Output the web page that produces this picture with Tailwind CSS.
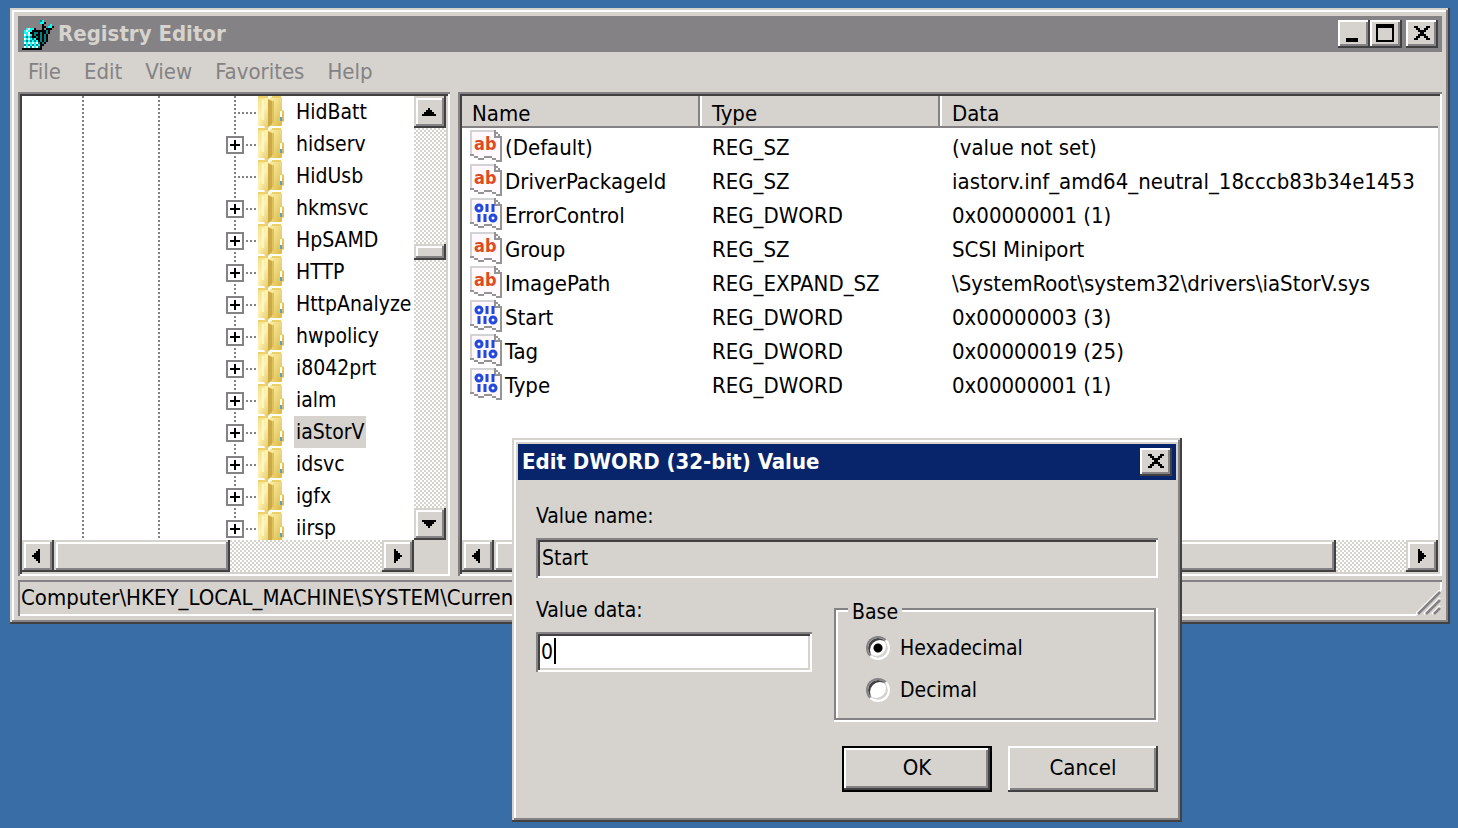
<!DOCTYPE html>
<html lang="en">
  <head>
    <meta charset="UTF-8" />
    <meta name="viewport" content="width=device-width, initial-scale=1.0" />
    <title>Registry Editor</title>
    <script src="https://cdn.jsdelivr.net/npm/@tailwindcss/browser@4"></script>
  </head>
  <body class="relative min-h-screen overflow-hidden bg-[#396da5] pt-2 pr-2 pl-[10px] font-['DejaVu_Sans_Condensed','DejaVu_Sans',sans-serif] text-[21px] leading-8 text-black">
    <!-- Icon shapes -->
    <svg class="absolute h-0 w-0">
      <defs>
        <linearGradient id="leftPanel" x1="0" y1="0" x2="1" y2="1">
          <stop offset="0" stop-color="#f3dc7c" />
          <stop offset="0.4" stop-color="#fdf3b4" />
          <stop offset="1" stop-color="#dfbd50" />
        </linearGradient>
        <linearGradient id="rightPanel" x1="0" y1="0" x2="1" y2="1">
          <stop offset="0" stop-color="#fbeea6" />
          <stop offset="0.5" stop-color="#ecd476" />
          <stop offset="1" stop-color="#d9b534" />
        </linearGradient>
      </defs>
      <symbol id="folder" viewBox="0 0 26 32">
        <path d="M12 1h12v13l2 1v10l-2 1v3l-1 1H12z" fill="url(#rightPanel)" />
        <path d="M0 1h10l4 3v24l-4 4H7l-1-2H0z" fill="url(#leftPanel)" />
        <path d="M10 3l4 2v23l-4 3z" fill="#cda945" />
        <path d="M14 5h2v22h-2z" fill="#dfc05a" />
        <path d="M4 4h2v20H4z" fill="#fff6c4" />
        <path d="M0 0h10v2H0zM14 0h9v2h-9z" fill="#ecd06a" />
        <path d="M22 15h2v6h-2z" fill="#fff" />
        <path d="M22 21h2v4h-2z" fill="#4aa5d6" />
      </symbol>
      <symbol id="page" viewBox="0 0 16 16">
        <path d="M0 0h12l4 4v11h-2l-1-1h-2l-1 1H6l-2-1H2l-2-1z" fill="#fff9fd" />
        <path d="M0 0h12v1H1v11H0z" fill="#d3d3d6" />
        <path d="M12 0h1v1h1v1h1v1h1v12h-1V4h-3z" fill="#949494" />
        <path d="M13 2h1v1h-1z" fill="#fff" />
        <path d="M0 12h2v1H0zM2 13h2v1H2zM4 14h3v1H4zM7 13h4v1H7zM11 14h2v1h-2zM13 15h3v1h-3z" fill="#949494" />
      </symbol>
      <symbol id="close" viewBox="0 0 8 7">
        <path d="M0 0h2v1h1v1h2V1h1V0h2v1H7v1H6v1H5v1h1v1h1v1h1v1H6V6H5V5H3v1H2v1H0V6h1V5h1V4h1V3H2V2H1V1H0z" />
      </symbol>
      <symbol id="arrow-up" viewBox="0 0 7 4">
        <path d="M3 0h1v1h1v1h1v1h1v1H0V3h1V2h1V1h1z" />
      </symbol>
      <symbol id="arrow-down" viewBox="0 0 7 4">
        <path d="M0 0h7v1H6v1H5v1H4v1H3V3H2V2H1V1H0z" />
      </symbol>
      <symbol id="arrow-left" viewBox="0 0 4 7">
        <path d="M0 3h1V2h1V1h1V0h1v7H3V6H2V5H1V4H0z" />
      </symbol>
      <symbol id="arrow-right" viewBox="0 0 4 7">
        <path d="M0 0h1v1h1v1h1v1h1v1H3v1H2v1H1v1H0z" />
      </symbol>
    </svg>

    <!-- Main window -->
    <main class="bg-[#d6d3ce] p-2 shadow-[inset_-2px_-2px_#424142,inset_2px_2px_#d6d3ce,inset_-4px_-4px_#848284,inset_4px_4px_#fff]">
      <header class="flex h-9 items-center bg-[#848284] pr-1 pl-1">
        <svg id="appIcon" class="mr-1 h-8 w-8" viewBox="0 0 16 16" shape-rendering="crispEdges"></svg>
        <h1 class="flex-1 text-[22px] font-bold text-[#d6d3ce]">Registry Editor</h1>
        <button aria-label="Minimize" class="flex h-7 w-8 items-end bg-[#d6d3ce] pb-[6px] pl-2 shadow-[inset_-2px_-2px_#424142,inset_2px_2px_#fff,inset_-4px_-4px_#848284]">
          <span class="h-1 w-3 bg-black"></span>
        </button>
        <button aria-label="Maximize" class="flex h-7 w-8 items-start bg-[#d6d3ce] pt-1 pl-[6px] shadow-[inset_-2px_-2px_#424142,inset_2px_2px_#fff,inset_-4px_-4px_#848284]">
          <span class="h-[18px] w-[18px] border-2 border-t-4 border-black"></span>
        </button>
        <button aria-label="Close" class="ml-1 flex h-7 w-8 items-start bg-[#d6d3ce] pt-[6px] pl-2 shadow-[inset_-2px_-2px_#424142,inset_2px_2px_#fff,inset_-4px_-4px_#848284]">
          <svg class="h-[14px] w-4" shape-rendering="crispEdges"><use href="#close" /></svg>
        </button>
      </header>

      <nav class="flex h-10 items-center gap-[23px] pl-[10px] text-[22px] text-[#848284]">
        <button>File</button>
        <button>Edit</button>
        <button>View</button>
        <button>Favorites</button>
        <button>Help</button>
      </nav>

      <div class="flex gap-2">
        <!-- Key tree -->
        <section class="w-[432px] shrink-0 bg-white p-1 shadow-[inset_2px_2px_#848284,inset_-2px_-2px_#fff,inset_4px_4px_#424142,inset_-4px_-4px_#d6d3ce]">
          <div class="flex h-[444px]">
            <ul id="keyTree" class="min-w-0 flex-1 overflow-hidden"></ul>
            <div class="flex w-8 flex-col bg-[conic-gradient(#fff_25%,#d6d3ce_0_50%,#fff_0_75%,#d6d3ce_0)] bg-[length:4px_4px]">
              <button aria-label="Scroll up" class="flex h-8 w-8 items-center justify-center bg-[#d6d3ce] pr-[2px] shadow-[inset_-2px_-2px_#424142,inset_2px_2px_#d6d3ce,inset_-4px_-4px_#848284,inset_4px_4px_#fff]">
                <svg class="h-2 w-[14px]" shape-rendering="crispEdges"><use href="#arrow-up" /></svg>
              </button>
              <div class="mt-[116px] h-4 bg-[#d6d3ce] shadow-[inset_-2px_-2px_#424142,inset_2px_2px_#d6d3ce,inset_-4px_-4px_#848284,inset_4px_4px_#fff]"></div>
              <button aria-label="Scroll down" class="mt-auto flex h-8 w-8 items-center justify-center bg-[#d6d3ce] pr-[2px] shadow-[inset_-2px_-2px_#424142,inset_2px_2px_#d6d3ce,inset_-4px_-4px_#848284,inset_4px_4px_#fff]">
                <svg class="h-2 w-[14px]" shape-rendering="crispEdges"><use href="#arrow-down" /></svg>
              </button>
            </div>
          </div>
          <div class="flex h-8 bg-[#d6d3ce]">
            <div class="flex flex-1 bg-[conic-gradient(#fff_25%,#d6d3ce_0_50%,#fff_0_75%,#d6d3ce_0)] bg-[length:4px_4px]">
              <button aria-label="Scroll left" class="flex h-8 w-8 items-center justify-center bg-[#d6d3ce] pr-1 shadow-[inset_-2px_-2px_#424142,inset_2px_2px_#d6d3ce,inset_-4px_-4px_#848284,inset_4px_4px_#fff]">
                <svg class="h-[14px] w-2" shape-rendering="crispEdges"><use href="#arrow-left" /></svg>
              </button>
              <div class="w-44 bg-[#d6d3ce] shadow-[inset_-2px_-2px_#424142,inset_2px_2px_#d6d3ce,inset_-4px_-4px_#848284,inset_4px_4px_#fff]"></div>
              <button aria-label="Scroll right" class="ml-auto flex h-8 w-8 items-center justify-center bg-[#d6d3ce] shadow-[inset_-2px_-2px_#424142,inset_2px_2px_#d6d3ce,inset_-4px_-4px_#848284,inset_4px_4px_#fff]">
                <svg class="h-[14px] w-2" shape-rendering="crispEdges"><use href="#arrow-right" /></svg>
              </button>
            </div>
            <div class="w-8"></div>
          </div>
        </section>

        <!-- Value list -->
        <section class="min-w-0 flex-1 bg-white p-1 shadow-[inset_2px_2px_#848284,inset_-2px_-2px_#fff,inset_4px_4px_#424142,inset_-4px_-4px_#d6d3ce]">
          <div class="h-[444px] overflow-hidden">
            <table class="w-full table-fixed text-left text-[22px] leading-7 whitespace-nowrap">
              <thead class="bg-[#d6d3ce]">
                <tr>
                  <th class="w-60 p-0 pt-1 pl-[10px] font-normal shadow-[inset_0_-2px_#848284,inset_-2px_0_#fff,inset_-4px_0_#848284]">Name</th>
                  <th class="w-60 p-0 pt-1 pl-[10px] font-normal shadow-[inset_0_-2px_#848284,inset_-2px_0_#fff,inset_-4px_0_#848284]">Type</th>
                  <th class="p-0 pt-1 pl-[10px] font-normal shadow-[inset_0_-2px_#848284]">Data</th>
                </tr>
              </thead>
              <tbody id="valueRows"></tbody>
            </table>
          </div>
          <div class="flex h-8 bg-[conic-gradient(#fff_25%,#d6d3ce_0_50%,#fff_0_75%,#d6d3ce_0)] bg-[length:4px_4px]">
            <button aria-label="Scroll left" class="flex h-8 w-8 items-center justify-center bg-[#d6d3ce] pr-1 shadow-[inset_-2px_-2px_#424142,inset_2px_2px_#d6d3ce,inset_-4px_-4px_#848284,inset_4px_4px_#fff]">
              <svg class="h-[14px] w-2" shape-rendering="crispEdges"><use href="#arrow-left" /></svg>
            </button>
            <div class="mr-[70px] flex-1 bg-[#d6d3ce] shadow-[inset_-2px_-2px_#424142,inset_2px_2px_#d6d3ce,inset_-4px_-4px_#848284,inset_4px_4px_#fff]"></div>
            <button aria-label="Scroll right" class="flex h-8 w-8 items-center justify-center bg-[#d6d3ce] shadow-[inset_-2px_-2px_#424142,inset_2px_2px_#d6d3ce,inset_-4px_-4px_#848284,inset_4px_4px_#fff]">
              <svg class="h-[14px] w-2" shape-rendering="crispEdges"><use href="#arrow-right" /></svg>
            </button>
          </div>
        </section>
      </div>

      <footer class="mt-1 flex h-9 items-center justify-between pl-[3px] shadow-[inset_2px_2px_#848284,inset_-2px_-2px_#fff]">
        <p class="text-[22px] whitespace-nowrap">Computer\HKEY_LOCAL_MACHINE\SYSTEM\Curren</p>
        <svg class="h-[26px] w-[26px] self-end" viewBox="0 0 13 13">
          <path d="M0 13L13 0v13z" fill="#d6d3ce" />
          <path d="M0 12L12 0M4 12L12 4M8 12L12 8" stroke="#fff" />
          <path d="M1 12L12 1M5 12L12 5M9 12L12 9" stroke="#848284" stroke-width="1.300" />
        </svg>
      </footer>
    </main>

    <!-- Edit value dialog -->
    <form role="dialog" aria-labelledby="dialogTitle" class="absolute top-[438px] left-[512px] w-[670px] bg-[#d6d3ce] p-[6px] shadow-[inset_-2px_-2px_#424142,inset_2px_2px_#d6d3ce,inset_-4px_-4px_#848284,inset_4px_4px_#fff]">
      <header class="flex h-9 items-center bg-[#08246b] px-1">
        <h2 id="dialogTitle" class="flex-1 text-[22px] font-bold text-white">Edit DWORD (32-bit) Value</h2>
        <button type="button" aria-label="Close" class="flex h-7 w-8 items-start bg-[#d6d3ce] pt-[6px] pl-2 shadow-[inset_-2px_-2px_#424142,inset_2px_2px_#fff,inset_-4px_-4px_#848284]">
          <svg class="h-[14px] w-4" shape-rendering="crispEdges"><use href="#close" /></svg>
        </button>
      </header>

      <div class="px-[18px] pt-5 pb-6">
        <label for="valueName" class="block">Value name:</label>
        <input id="valueName" type="text" value="Start" readonly class="mt-[6px] block h-10 w-full px-[6px] shadow-[inset_2px_2px_#848284,inset_-2px_-2px_#fff,inset_4px_4px_#424142]" />

        <div class="mt-4 flex gap-[22px]">
          <div class="flex-1">
            <label for="valueData" class="block">Value data:</label>
            <div class="relative mt-[6px]">
              <input id="valueData" type="text" value="0" class="block h-10 w-full bg-white px-[5px] shadow-[inset_2px_2px_#848284,inset_-2px_-2px_#fff,inset_4px_4px_#424142,inset_-4px_-4px_#d6d3ce]" />
              <span class="absolute top-[6px] left-[18px] h-[26px] w-[2px] bg-black"></span>
            </div>
          </div>
          <div role="radiogroup" aria-labelledby="baseLabel" class="relative mt-[14px] h-[114px] w-[324px] pt-6 pl-8 shadow-[inset_-2px_-2px_#fff,inset_2px_2px_#848284,inset_-4px_-4px_#848284,inset_4px_4px_#fff]">
            <span id="baseLabel" class="absolute -top-3 left-[14px] bg-[#d6d3ce] px-1 leading-8">Base</span>
            <label class="flex h-8 items-center gap-[10px]">
              <input type="radio" name="base" checked class="h-6 w-6 appearance-none rounded-full border-2 border-t-[#848284] border-r-white border-b-white border-l-[#848284] bg-white shadow-[inset_2px_2px_#424142,inset_-2px_-2px_#d6d3ce] checked:bg-[radial-gradient(circle,#000_4px,#fff_5px)]" />
              Hexadecimal
            </label>
            <label class="mt-[10px] flex h-8 items-center gap-[10px]">
              <input type="radio" name="base" class="h-6 w-6 appearance-none rounded-full border-2 border-t-[#848284] border-r-white border-b-white border-l-[#848284] bg-white shadow-[inset_2px_2px_#424142,inset_-2px_-2px_#d6d3ce] checked:bg-[radial-gradient(circle,#000_4px,#fff_5px)]" />
              Decimal
            </label>
          </div>
        </div>

        <div class="mt-6 flex justify-end gap-4 text-[22px]">
          <button type="submit" class="h-[46px] w-[150px] border-2 border-black pb-[2px] shadow-[inset_-2px_-2px_#424142,inset_2px_2px_#fff,inset_-4px_-4px_#848284]">OK</button>
          <button type="button" class="h-[46px] w-[150px] pb-[2px] shadow-[inset_-2px_-2px_#424142,inset_2px_2px_#fff,inset_-4px_-4px_#848284]">Cancel</button>
        </div>
      </div>
    </form>

    <script>
      const keys = [
        { name: "HidBatt", leaf: true },
        { name: "hidserv" },
        { name: "HidUsb", leaf: true },
        { name: "hkmsvc" },
        { name: "HpSAMD" },
        { name: "HTTP" },
        { name: "HttpAnalyze" },
        { name: "hwpolicy" },
        { name: "i8042prt" },
        { name: "ialm" },
        { name: "iaStorV", selected: true },
        { name: "idsvc" },
        { name: "igfx" },
        { name: "iirsp" },
      ];

      const values = [
        ["(Default)", "REG_SZ", "(value not set)"],
        ["DriverPackageId", "REG_SZ", "iastorv.inf_amd64_neutral_18cccb83b34e1453"],
        ["ErrorControl", "REG_DWORD", "0x00000001 (1)"],
        ["Group", "REG_SZ", "SCSI Miniport"],
        ["ImagePath", "REG_EXPAND_SZ", "\\SystemRoot\\system32\\drivers\\iaStorV.sys"],
        ["Start", "REG_DWORD", "0x00000003 (3)"],
        ["Tag", "REG_DWORD", "0x00000019 (25)"],
        ["Type", "REG_DWORD", "0x00000001 (1)"],
      ];

      const line = `<span class="h-8 w-[2px] shrink-0 bg-[repeating-linear-gradient(#848284_0_2px,#fff_2px_4px)]"></span>`;
      const expander = `
        <button aria-label="Expand" class="absolute top-2 -left-2 flex h-[18px] w-[18px] items-center justify-center border-2 border-[#848284] bg-white">
          <svg class="h-[10px] w-[10px]" viewBox="0 0 5 5" shape-rendering="crispEdges"><path d="M2 0h1v2h2v1H3v2H2V3H0V2h2z" /></svg>
        </button>`;

      // Value icons
      const stringIcon = `<text x="4" y="20" class="text-[18px] font-bold" fill="#e04a21">ab</text>`;
      const binaryIcon = `
        <g fill="none" stroke="#2149de" stroke-width="3">
          <circle cx="9" cy="10" r="3" />
          <circle cx="23" cy="20" r="3" />
          <path d="M17 6v8M23 6v8M9 16v8M15 16v8" />
        </g>`;

      // Tree rows
      document.getElementById("keyTree").innerHTML = keys
        .map(
          (key) => `
        <li class="flex h-8 gap-[74px] pl-[60px]">
          ${line}${line}
          <div class="relative flex">
            ${line}
            <span class="mt-4 mr-[2px] ml-[2px] h-[2px] w-[18px] bg-[repeating-linear-gradient(90deg,#848284_0_2px,#fff_2px_4px)]"></span>
            ${key.leaf ? "" : expander}
            <svg class="h-8 w-[26px] shrink-0"><use href="#folder" /></svg>
            <span class="${key.selected ? "ml-[10px] bg-[#d6d3ce] px-[2px]" : "ml-[10px] px-[2px]"}">${key.name}</span>
          </div>
        </li>`
        )
        .join("");

      // Value rows
      document.getElementById("valueRows").innerHTML = values
        .map(
          ([name, type, data]) => `
        <tr>
          <td class="p-0 pt-[2px] pl-2">
            <div class="flex items-start gap-[3px]">
              <svg class="h-8 w-8" viewBox="0 0 32 32"><use href="#page" />${type === "REG_DWORD" ? binaryIcon : stringIcon}</svg>
              <span class="pt-1">${name}</span>
            </div>
          </td>
          <td class="p-0 pt-[6px] pl-[10px]">${type}</td>
          <td class="p-0 pt-[6px] pl-[10px]">${data}</td>
        </tr>`
        )
        .join("");

      // Title bar icon, one character per pixel
      const colors = { K: "#000", C: "#00ffff", W: "#fff", T: "#008284" };
      const pixels = [
        "................",
        ".........TC.....",
        ".........CCK....",
        "..........K...C.",
        "..........KK.CCK",
        "..CWCCK...K.KKK.",
        ".CWCCKKKKKKKTK..",
        ".CCWKKTTKTKKTK..",
        ".WCWCKTKKTKTK...",
        ".CTCTKKTKTKTK...",
        ".WCWCTCKKTKTK...",
        ".CTCTCTCKTKTK...",
        ".WCWCWCWTKTK....",
        ".TCTCTCTCKK.....",
        ".WCWTWCWTK......",
        "KKKKKKKKKK......",
      ];
      document.getElementById("appIcon").innerHTML = pixels
        .flatMap((row, y) =>
          [...row].map((c, x) =>
            colors[c] ? `<rect x="${x}" y="${y}" width="1" height="1" fill="${colors[c]}" />` : ""
          )
        )
        .join("");
    </script>
  </body>
</html>
